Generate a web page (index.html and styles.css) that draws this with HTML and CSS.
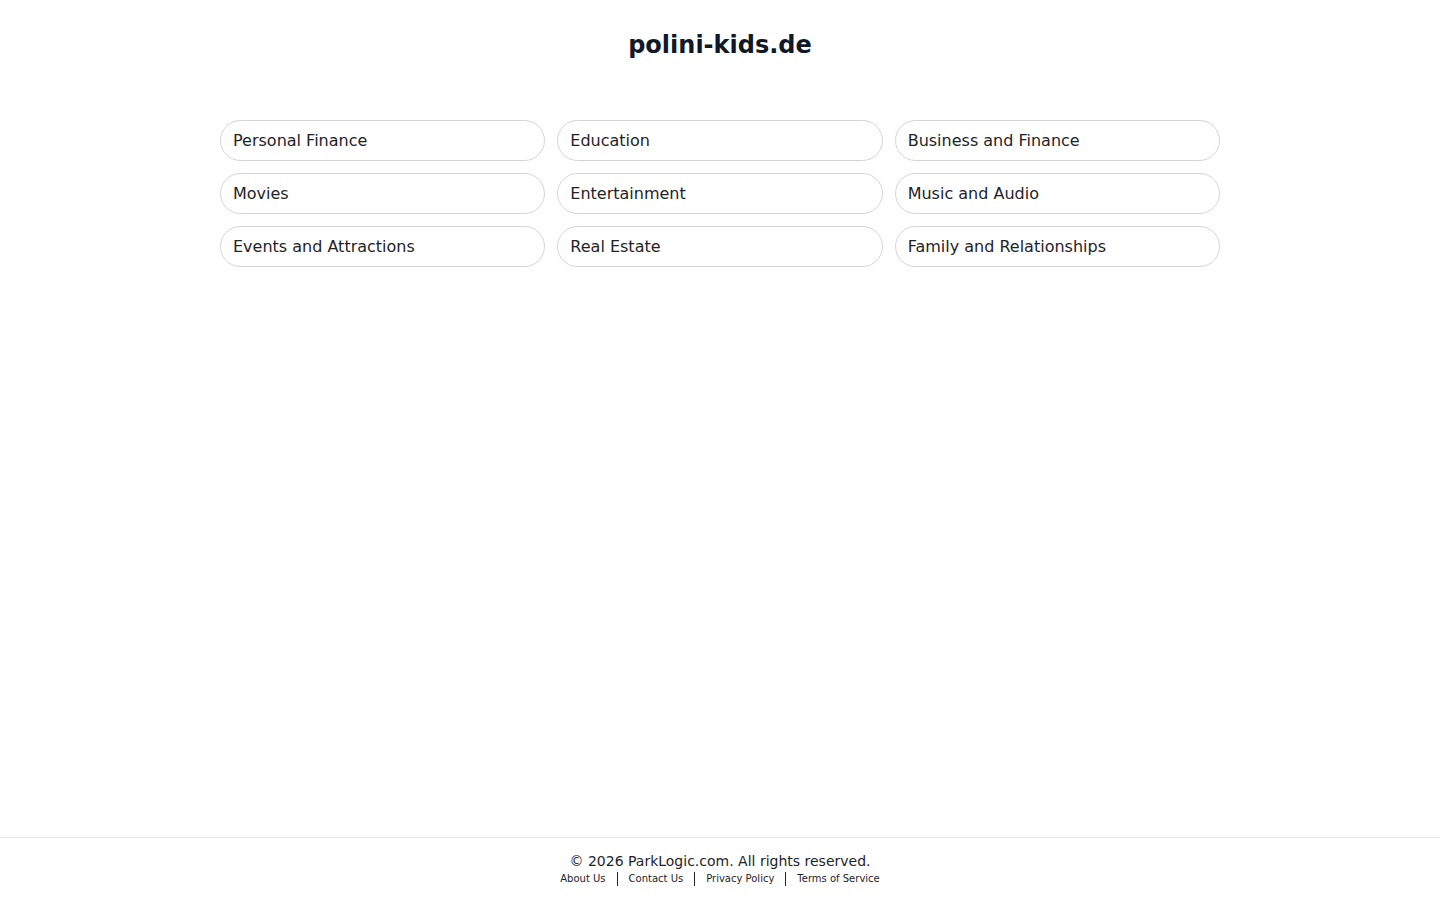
FILE: index.html
```html
<!DOCTYPE html>
<html lang="en">
<head>
    <meta charset="UTF-8">
    <meta name="viewport" content="width=device-width, initial-scale=1.0">
    <title>polini-kids.de</title>
    <link rel="stylesheet" href="styles.css">
</head>
<body>
    <main class="page">
        <h1 class="domain">polini-kids.de</h1>
        <div class="topics">
            <a class="topic" href="#">Personal Finance</a>
            <a class="topic" href="#">Education</a>
            <a class="topic" href="#">Business and Finance</a>
            <a class="topic" href="#">Movies</a>
            <a class="topic" href="#">Entertainment</a>
            <a class="topic" href="#">Music and Audio</a>
            <a class="topic" href="#">Events and Attractions</a>
            <a class="topic" href="#">Real Estate</a>
            <a class="topic" href="#">Family and Relationships</a>
        </div>
    </main>
    <footer class="footer">
        <p class="copyright">&copy; 2026 ParkLogic.com. All rights reserved.</p>
        <nav class="footer-links">
            <a href="#">About Us</a>
            <span class="sep"></span>
            <a href="#">Contact Us</a>
            <span class="sep"></span>
            <a href="#">Privacy Policy</a>
            <span class="sep"></span>
            <a href="#">Terms of Service</a>
        </nav>
    </footer>
</body>
</html>
```

FILE: styles.css
```css
html, body {
    margin: 0;
    padding: 0;
}
body {
    font-family: "DejaVu Sans", "Liberation Sans", sans-serif;
    color: #1f2328;
    background: #fff;
    min-height: 100vh;
    display: flex;
    flex-direction: column;
}
.page {
    flex: 1;
    display: flex;
    flex-direction: column;
    align-items: center;
}
.domain {
    margin: 29px 0 0;
    font-size: 24px;
    line-height: 32px;
    font-weight: bold;
    color: #111827;
}
.topics {
    margin-top: 59px;
    width: 1000px;
    display: grid;
    grid-template-columns: repeat(3, 1fr);
    gap: 12px;
}
.topic {
    display: block;
    height: 41px;
    box-sizing: border-box;
    padding: 0 12px;
    border: 1px solid #d4d4d8;
    border-radius: 21px;
    font-size: 16px;
    line-height: 39px;
    color: #1f2328;
    text-decoration: none;
}
.topic:hover {
    background: #f7f7f8;
}
.footer {
    border-top: 1px solid #e5e7eb;
    padding: 14px 0 13px;
    text-align: center;
}
.copyright {
    margin: 0;
    font-size: 14px;
    line-height: 18px;
    color: #1f2328;
}
.footer-links {
    display: flex;
    justify-content: center;
    align-items: center;
    font-size: 10px;
    line-height: 16px;
    margin-top: 1px;
}
.footer-links a {
    color: #1f2328;
    text-decoration: none;
}
.sep {
    display: inline-block;
    width: 1px;
    height: 14px;
    background: #1f2328;
    margin: 0 11px;
}
```
